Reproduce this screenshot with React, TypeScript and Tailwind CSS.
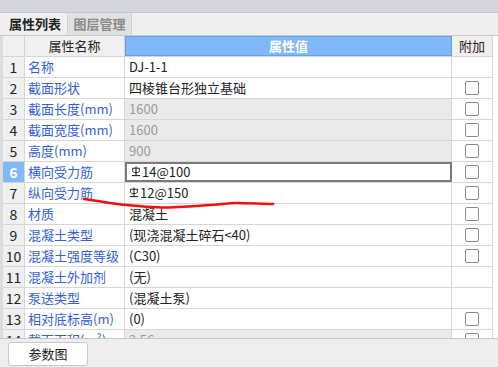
import React from 'react';

type Row = {
  no: number;
  name: string;
  value: string;
  rebar?: boolean;
  disabled?: boolean;
  active?: boolean;
  check?: boolean;
};

const rows: Row[] = [
  { no: 1, name: '名称', value: 'DJ-1-1' },
  { no: 2, name: '截面形状', value: '四棱锥台形独立基础', check: true },
  { no: 3, name: '截面长度(mm)', value: '1600', disabled: true, check: true },
  { no: 4, name: '截面宽度(mm)', value: '1600', disabled: true, check: true },
  { no: 5, name: '高度(mm)', value: '900', disabled: true, check: true },
  { no: 6, name: '横向受力筋', value: '14@100', rebar: true, active: true, check: true },
  { no: 7, name: '纵向受力筋', value: '12@150', rebar: true, check: true },
  { no: 8, name: '材质', value: '混凝土', check: true },
  { no: 9, name: '混凝土类型', value: '(现浇混凝土碎石<40)', check: true },
  { no: 10, name: '混凝土强度等级', value: '(C30)', check: true },
  { no: 11, name: '混凝土外加剂', value: '(无)' },
  { no: 12, name: '泵送类型', value: '(混凝土泵)' },
  { no: 13, name: '相对底标高(m)', value: '(0)', check: true },
  { no: 14, name: '截面面积(m²)', value: '2.56', disabled: true, check: true },
];

// 三级钢筋符号
function RebarIcon() {
  return (
    <svg width="10" height="12" viewBox="0 0 10 12" className="mr-[1px] shrink-0">
      <path d="M5 0.5V9.5" stroke="#222" strokeWidth="1.1" fill="none" />
      <path d="M1.6 2.2H8.4V4.6C8.4 6 7.4 6.6 5 6.6S1.6 6 1.6 4.6Z" stroke="#222" strokeWidth="1" fill="none" />
      <path d="M0.8 9.6H9.2" stroke="#222" strokeWidth="1.1" />
    </svg>
  );
}

function Checkbox() {
  return <div className="w-[14px] h-[14px] rounded-[2px] border border-[#8a8a8a] bg-white" />;
}

export default function App() {
  return (
    <div
      className="relative w-[498px] h-[367px] overflow-hidden bg-white flex flex-col text-[13px] text-[#222]"
      style={{ fontFamily: '"Noto Sans CJK SC", "Noto Sans", sans-serif' }}
    >
      {/* title strip */}
      <div className="h-[13px] shrink-0 bg-[#d5d6db] border-b border-[#c3c4c9]" />

      {/* tabs */}
      <div className="h-[23px] shrink-0 flex bg-[#efefef] border-b border-[#c9c9c9] pl-[3px]">
        <div className="w-[64px] flex items-center justify-center font-bold text-[#222]">属性列表</div>
        <div className="w-[65px] flex items-center justify-center bg-[#e1e1e1] text-[#8a8a8a] font-bold border-x border-[#d2d2d2]">
          图层管理
        </div>
      </div>

      {/* table */}
      <div className="flex-1 flex overflow-hidden">
        <div className="w-[3px] shrink-0 bg-[#dcdcdc]" />
        <div className="flex flex-col w-[490px] shrink-0">
          <div className="h-[21px] shrink-0 flex border-b border-[#d4d4d4] bg-[#f0f0f0]">
            <div className="w-[22px] shrink-0 border-r border-[#d4d4d4]" />
            <div className="w-[100px] shrink-0 border-r border-[#d4d4d4] flex items-center justify-center">属性名称</div>
            <div className="w-[327px] shrink-0 bg-[#7fb9f8] border border-[#5fa2ec] flex items-center justify-center text-white font-bold">
              属性值
            </div>
            <div className="w-[41px] shrink-0 border-r border-[#d4d4d4] flex items-center justify-center">附加</div>
          </div>
          {rows.map((r) => (
            <div key={r.no} className="h-[21px] shrink-0 flex border-b border-[#d6d6d6]">
              <div
                className={`w-[22px] shrink-0 border-r border-[#d6d6d6] flex items-center justify-center text-[14px] ${
                  r.active ? 'bg-[#7fb9f8] text-white font-bold' : 'bg-[#f0f0f0] text-[#222]'
                }`}
              >
                {r.no}
              </div>
              <div className="w-[100px] shrink-0 border-r border-[#d6d6d6] flex items-center pl-[3px] text-[#3361d8] whitespace-nowrap overflow-hidden">
                {r.name}
              </div>
              <div
                className={`w-[327px] shrink-0 flex items-center pl-[4px] whitespace-nowrap ${
                  r.active ? 'border-2 border-[#7a7a7a] bg-white' : 'border-r border-[#d6d6d6]'
                } ${r.disabled ? 'bg-[#eaeaea] text-[#9a9a9a]' : ''}`}
              >
                {r.rebar && <RebarIcon />}
                {r.value}
              </div>
              <div className="w-[41px] shrink-0 border-r border-[#d6d6d6] flex items-center justify-center">
                {r.check && <Checkbox />}
              </div>
            </div>
          ))}
        </div>
        <div className="flex-1 bg-white" />
      </div>

      {/* bottom */}
      <div className="h-[29px] shrink-0 bg-[#eeeeee] border-t border-[#c6c6c6] pl-[8px] pt-[3px]">
        <button className="w-[80px] h-[24px] bg-white border border-[#c8c8c8] rounded-[3px] text-[13px] text-[#222]">
          参数图
        </button>
      </div>

      {/* hand-drawn annotation */}
      <svg className="absolute left-0 top-0 pointer-events-none" width="498" height="367">
        <path
          d="M84 199 C100 201 115 204 127 205 C140 206 150 207.5 162 207.5 C180 207.5 195 206 210 205 C225 204 228 203 235 203 C250 203 262 204 273 204"
          stroke="#f01010"
          strokeWidth="2.5"
          fill="none"
          strokeLinecap="round"
        />
      </svg>
    </div>
  );
}
